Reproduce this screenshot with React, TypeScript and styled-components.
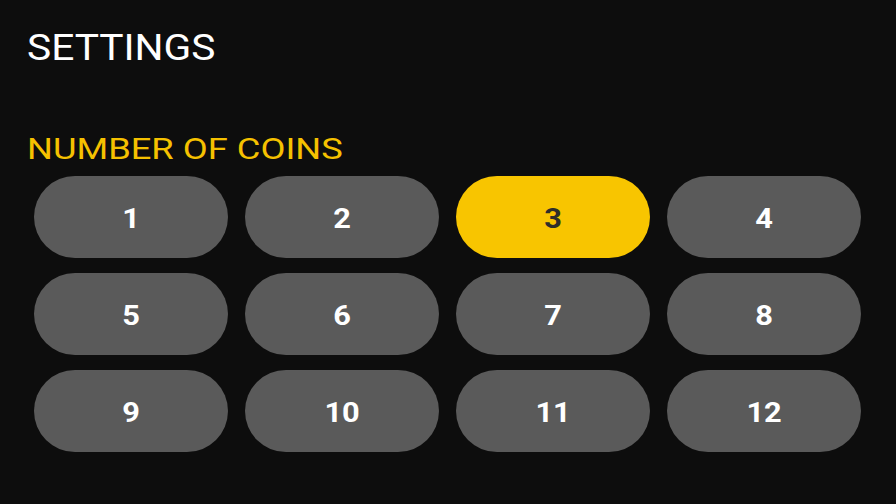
import React, { useState } from "react";
import styled, { createGlobalStyle } from "styled-components";

const Global = createGlobalStyle`
  html, body {
    margin: 0;
    padding: 0;
    background: #0d0d0d;
    font-family: Roboto, "Liberation Sans", Arial, sans-serif;
  }
`;

const Page = styled.div`
  width: 896px;
  height: 504px;
  box-sizing: border-box;
  padding: 27px 35px 0 27px;
  background: #0d0d0d;
  display: flex;
  flex-direction: column;
`;

const Title = styled.h1`
  margin: 0;
  font-size: 36px;
  font-weight: 400;
  line-height: 42px;
  color: #ffffff;
`;

const Stretch = styled.span<{ $sx: number; $origin?: string }>`
  display: inline-block;
  transform: scaleX(${(p) => p.$sx});
  transform-origin: ${(p) => p.$origin ?? "left center"};
`;

const Label = styled.h2`
  margin: 62px 0 0 0;
  font-size: 30px;
  font-weight: 400;
  line-height: 35px;
  color: #f5c100;
`;

const Grid = styled.div`
  margin: 10px 0 0 7px;
  display: grid;
  grid-template-columns: repeat(4, 1fr);
  column-gap: 17px;
  row-gap: 15px;
`;

const CoinButton = styled.button<{ $active: boolean }>`
  height: 82px;
  border: none;
  border-radius: 41px;
  padding: 3px 0 0 0;
  background: ${(p) => (p.$active ? "#f8c500" : "#5a5a5a")};
  color: ${(p) => (p.$active ? "#2e2e2a" : "#ffffff")};
  font-family: Roboto, "Liberation Sans", Arial, sans-serif;
  font-size: 28px;
  font-weight: 700;
  display: flex;
  align-items: center;
  justify-content: center;
  cursor: pointer;
`;

export default function App() {
  const [selected, setSelected] = useState(3);
  const coins = Array.from({ length: 12 }, (_, i) => i + 1);
  return (
    <>
      <Global />
      <Page>
        <Title>
          <Stretch $sx={1.13}>SETTINGS</Stretch>
        </Title>
        <Label>
          <Stretch $sx={1.21}>NUMBER OF COINS</Stretch>
        </Label>
        <Grid>
          {coins.map((n) => (
            <CoinButton key={n} $active={n === selected} onClick={() => setSelected(n)}>
              <Stretch $sx={1.1} $origin="center">
                {n}
              </Stretch>
            </CoinButton>
          ))}
        </Grid>
      </Page>
    </>
  );
}
